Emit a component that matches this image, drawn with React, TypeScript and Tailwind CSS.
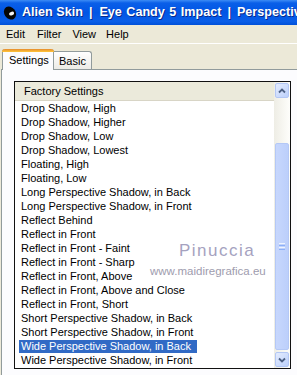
import React from "react";

const items = [
  "Drop Shadow, High",
  "Drop Shadow, Higher",
  "Drop Shadow, Low",
  "Drop Shadow, Lowest",
  "Floating, High",
  "Floating, Low",
  "Long Perspective Shadow, in Back",
  "Long Perspective Shadow, in Front",
  "Reflect Behind",
  "Reflect in Front",
  "Reflect in Front - Faint",
  "Reflect in Front - Sharp",
  "Reflect in Front, Above",
  "Reflect in Front, Above and Close",
  "Reflect in Front, Short",
  "Short Perspective Shadow, in Back",
  "Short Perspective Shadow, in Front",
  "Wide Perspective Shadow, in Back",
  "Wide Perspective Shadow, in Front",
];

function ScrollButton({ up }: { up: boolean }) {
  return (
    <div className="w-[14px] h-[15px] mx-auto rounded-[2px] border border-[#b3c7f5] bg-[linear-gradient(135deg,#e4ecfe,#bcd0fb)] flex items-center justify-center">
      <svg width="8" height="6" viewBox="0 0 8 6">
        <path
          d={up ? "M1 4.5 L4 1.5 L7 4.5" : "M1 1.5 L4 4.5 L7 1.5"}
          stroke="#4d6185"
          strokeWidth="1.8"
          fill="none"
        />
      </svg>
    </div>
  );
}

export default function App() {
  return (
    <div
      className="relative w-[297px] h-[375px] overflow-hidden bg-[#ece9d8] flex flex-col"
      style={{ fontFamily: '"Liberation Sans", Arial, sans-serif' }}
    >
      {/* Title bar */}
      <div className="h-[25px] shrink-0 flex items-center overflow-hidden bg-[linear-gradient(to_bottom,#3d8cf5_0%,#0a5fe8_12%,#0055e5_50%,#0a5ee8_85%,#0050d8_100%)]">
        <svg width="16" height="16" viewBox="0 0 16 16" className="shrink-0 ml-[2px] mr-[4px]">
          <ellipse cx="8" cy="8" rx="5.6" ry="7" transform="rotate(-35 8 8)" fill="#050505" />
          <ellipse cx="9.6" cy="8.6" rx="2.6" ry="1.8" transform="rotate(-20 9.6 8.6)" fill="#f4f4f4" />
        </svg>
        <div className="flex shrink-0 items-center whitespace-nowrap text-white font-bold text-[12.6px] leading-none [text-shadow:1px_1px_0_#0a2a8a]">
          <span>Alien Skin</span>
          <span className="ml-[6px] mr-[7px]">|</span>
          <span className="[word-spacing:1px]">Eye Candy 5 Impact</span>
          <span className="ml-[6px] mr-[6px]">|</span>
          <span className="[word-spacing:1px]">Perspective Shadow</span>
        </div>
      </div>

      {/* Menu bar */}
      <div className="h-[19px] shrink-0 flex items-center border-b border-white text-[11px] text-black">
        <span className="ml-[6px]">Edit</span>
        <span className="ml-[12px]">Filter</span>
        <span className="ml-[11px]">View</span>
        <span className="ml-[10px]">Help</span>
      </div>

      {/* Tabs */}
      <div className="h-[25px] shrink-0 flex items-end pl-[2px] text-[11px] text-black">
        <div className="relative z-10 w-[52px] h-[21px] -mb-px bg-[#fcfcfe] border-l border-r border-[#919b9c] rounded-t-[3px] flex flex-col">
          <div className="h-[3px] -mx-px rounded-t-[3px] bg-[linear-gradient(to_bottom,#e68b2c,#ffc73c)]" />
          <div className="flex-1 flex items-center pl-[6px] pb-[2px]">Settings</div>
        </div>
        <div className="w-[38px] h-[18px] border-t border-r border-[#919b9c] rounded-tr-[3px] bg-[linear-gradient(to_bottom,#ffffff,#ecebe6)] flex items-center pl-[5px] pt-[1px]">
          Basic
        </div>
      </div>

      {/* Panel */}
      <div className="flex-1 ml-px w-[320px] border-l border-t border-[#919b9c] bg-[#fcfcfe]">
        <div className="ml-[12px] mt-[11px] w-[277px] h-[288px] border border-[#111] bg-white flex text-[11px] text-black">
          <div className="flex-1 flex flex-col">
            <div className="h-[19px] shrink-0 bg-[#ebeadb] border-b border-[#d8d5c6] flex items-center pl-[9px]">
              Factory Settings
            </div>
            {items.map((t) => {
              const sel = t === "Wide Perspective Shadow, in Back";
              return (
                <div key={t} className="h-[14px] flex items-center pl-[4px]">
                  <span
                    className={
                      "whitespace-nowrap h-[13px] leading-[13px] pl-[2px] pr-[6px] " +
                      (sel ? "bg-[#316ac5] text-white" : "")
                    }
                  >
                    {t}
                  </span>
                </div>
              );
            })}
          </div>
          {/* Scrollbar */}
          <div className="w-[16px] shrink-0 bg-[linear-gradient(to_right,#eeede5,#fefefb)] flex flex-col pt-[1px] pb-px">
            <ScrollButton up />
            <div className="flex-1 flex flex-col pt-[45px] pb-[2px]">
              <div className="flex-1 mx-auto w-[14px] rounded-[2px] border border-[#b4c8f6] bg-[linear-gradient(to_right,#c7d7fd,#bccffb)] flex flex-col items-center justify-center gap-[1px]">
                <div className="w-[6px] h-px bg-[#eef4fe]" />
                <div className="w-[6px] h-px bg-[#8cb0f8]" />
                <div className="w-[6px] h-px bg-[#eef4fe]" />
                <div className="w-[6px] h-px bg-[#8cb0f8]" />
              </div>
            </div>
            <ScrollButton up={false} />
          </div>
        </div>
      </div>

      {/* Watermark */}
      <div className="absolute left-[179px] top-[241px] pointer-events-none text-[17px] leading-[20px] tracking-[1.5px] text-[#a5a2bf]">
        Pinuccia
      </div>
      <div className="absolute left-[150px] top-[265px] pointer-events-none text-[11.5px] leading-[12px] text-[#9e9cae]">
        www.maidiregrafica.eu
      </div>
    </div>
  );
}
